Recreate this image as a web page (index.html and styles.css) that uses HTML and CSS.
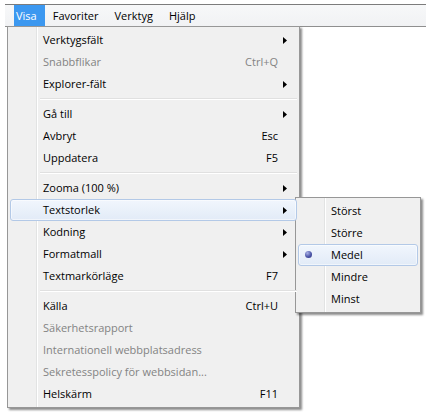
FILE: index.html
```html
<!doctype html>
<html lang="sv">
  <head>
    <meta charset="UTF-8" />
    <title>Visa-menyn</title>
    <link rel="stylesheet" href="styles.css">
  </head>
  <body>
    <div class="menubar">
      <div class="bar-item active">Visa</div>
      <div class="bar-item">Favoriter</div>
      <div class="bar-item">Verktyg</div>
      <div class="bar-item">Hjälp</div>
    </div>

    <div class="menu main-menu">
      <div class="item"><span class="label">Verktygsfält</span><span class="key"></span><span class="arrow"><svg width="4" height="7" viewBox="0 0 4 7"><polygon points="0,0 4,3.5 0,7" /></svg></span></div>
      <div class="item disabled"><span class="label">Snabbflikar</span><span class="key">Ctrl+Q</span><span class="arrow"></span></div>
      <div class="item"><span class="label">Explorer-fält</span><span class="key"></span><span class="arrow"><svg width="4" height="7" viewBox="0 0 4 7"><polygon points="0,0 4,3.5 0,7" /></svg></span></div>
      <div class="sep"></div>
      <div class="item"><span class="label">Gå till</span><span class="key"></span><span class="arrow"><svg width="4" height="7" viewBox="0 0 4 7"><polygon points="0,0 4,3.5 0,7" /></svg></span></div>
      <div class="item"><span class="label">Avbryt</span><span class="key">Esc</span><span class="arrow"></span></div>
      <div class="item"><span class="label">Uppdatera</span><span class="key">F5</span><span class="arrow"></span></div>
      <div class="sep"></div>
      <div class="item"><span class="label">Zooma (100 %)</span><span class="key"></span><span class="arrow"><svg width="4" height="7" viewBox="0 0 4 7"><polygon points="0,0 4,3.5 0,7" /></svg></span></div>
      <div class="item hover"><span class="label">Textstorlek</span><span class="key"></span><span class="arrow"><svg width="4" height="7" viewBox="0 0 4 7"><polygon points="0,0 4,3.5 0,7" /></svg></span></div>
      <div class="item"><span class="label">Kodning</span><span class="key"></span><span class="arrow"><svg width="4" height="7" viewBox="0 0 4 7"><polygon points="0,0 4,3.5 0,7" /></svg></span></div>
      <div class="item"><span class="label">Formatmall</span><span class="key"></span><span class="arrow"><svg width="4" height="7" viewBox="0 0 4 7"><polygon points="0,0 4,3.5 0,7" /></svg></span></div>
      <div class="item"><span class="label">Textmarkörläge</span><span class="key">F7</span><span class="arrow"></span></div>
      <div class="sep"></div>
      <div class="item"><span class="label">Källa</span><span class="key">Ctrl+U</span><span class="arrow"></span></div>
      <div class="item disabled"><span class="label">Säkerhetsrapport</span><span class="key"></span><span class="arrow"></span></div>
      <div class="item disabled"><span class="label">Internationell webbplatsadress</span><span class="key"></span><span class="arrow"></span></div>
      <div class="item disabled"><span class="label">Sekretesspolicy för webbsidan...</span><span class="key"></span><span class="arrow"></span></div>
      <div class="item"><span class="label">Helskärm</span><span class="key">F11</span><span class="arrow"></span></div>
    </div>

    <div class="menu sub-menu">
      <div class="item"><span class="label">Störst</span></div>
      <div class="item"><span class="label">Större</span></div>
      <div class="item hover checked"><span class="bullet"></span><span class="label">Medel</span></div>
      <div class="item"><span class="label">Mindre</span></div>
      <div class="item"><span class="label">Minst</span></div>
    </div>
  </body>
</html>
```

FILE: styles.css
```css
* {
  margin: 0;
  padding: 0;
  box-sizing: border-box;
}

body {
  font-family: 'Open Sans', 'Noto Sans', sans-serif;
  font-size: 11px;
  color: #000;
  background: #fff;
  width: 433px;
  height: 416px;
  position: relative;
  overflow: hidden;
}

/* menu bar */
.menubar {
  display: flex;
  gap: 6px;
  margin: 4px 0 0 5px;
  width: 421px;
  height: 23px;
  padding-left: 9px;
  background: linear-gradient(#f7f8f9, #f1f2f4);
  border-top: 1px solid #7c7c7c;
  border-bottom: 1px solid #8f8f8f;
}

.bar-item {
  padding: 0 8px 0 2px;
  line-height: 21px;
}

.bar-item.active {
  background: #3c98f0;
  color: #fff;
}

/* dropdowns */
.menu {
  position: absolute;
  background: #f0f0f0;
  border: 1px solid #979797;
  padding: 2px;
  box-shadow: 2px 2px 2px rgba(0, 0, 0, 0.45);
}

.menu:before {
  content: '';
  position: absolute;
  top: 0;
  bottom: 0;
  left: 28px;
  width: 1px;
  background: #e2e3e3;
  border-right: 1px solid #fff;
  box-sizing: content-box;
}

.main-menu {
  left: 7px;
  top: 26px;
  width: 293px;
}

.sub-menu {
  left: 295px;
  top: 197px;
  width: 126px;
}

.item {
  position: relative;
  z-index: 1;
  display: grid;
  grid-template-columns: 1fr auto 18px;
  align-items: center;
  height: 22px;
  padding-left: 32px;
  border: 1px solid transparent;
  border-radius: 3px;
}

.sub-menu .item {
  grid-template-columns: 1fr;
}

.item .label,
.item .key {
  line-height: 20px;
  margin-top: -1px;
}

.item .key {
  text-align: right;
}

.item .arrow {
  display: flex;
  align-items: center;
  padding-left: 5px;
}

.item .arrow svg {
  fill: #000;
}

.item.disabled {
  color: #838383;
}

.item.hover {
  background: linear-gradient(#f1f6fd, #e2ebf7);
  border-color: #b3c9e7;
  box-shadow: inset 0 0 0 1px rgba(255, 255, 255, 0.5);
}

.bullet {
  position: absolute;
  left: 6px;
  top: 6px;
  width: 7px;
  height: 7px;
  border-radius: 50%;
  background: radial-gradient(circle at 35% 30%, #aab2e6 0%, #4d56a8 55%, #2c3380 100%);
}

.sep {
  position: relative;
  z-index: 1;
  height: 8px;
  margin-left: 30px;
  display: flex;
  align-items: center;
}

.sep:before {
  content: '';
  display: block;
  width: 100%;
  height: 1px;
  background: #e0e0e0;
  border-bottom: 1px solid #fff;
  box-sizing: content-box;
}
```
